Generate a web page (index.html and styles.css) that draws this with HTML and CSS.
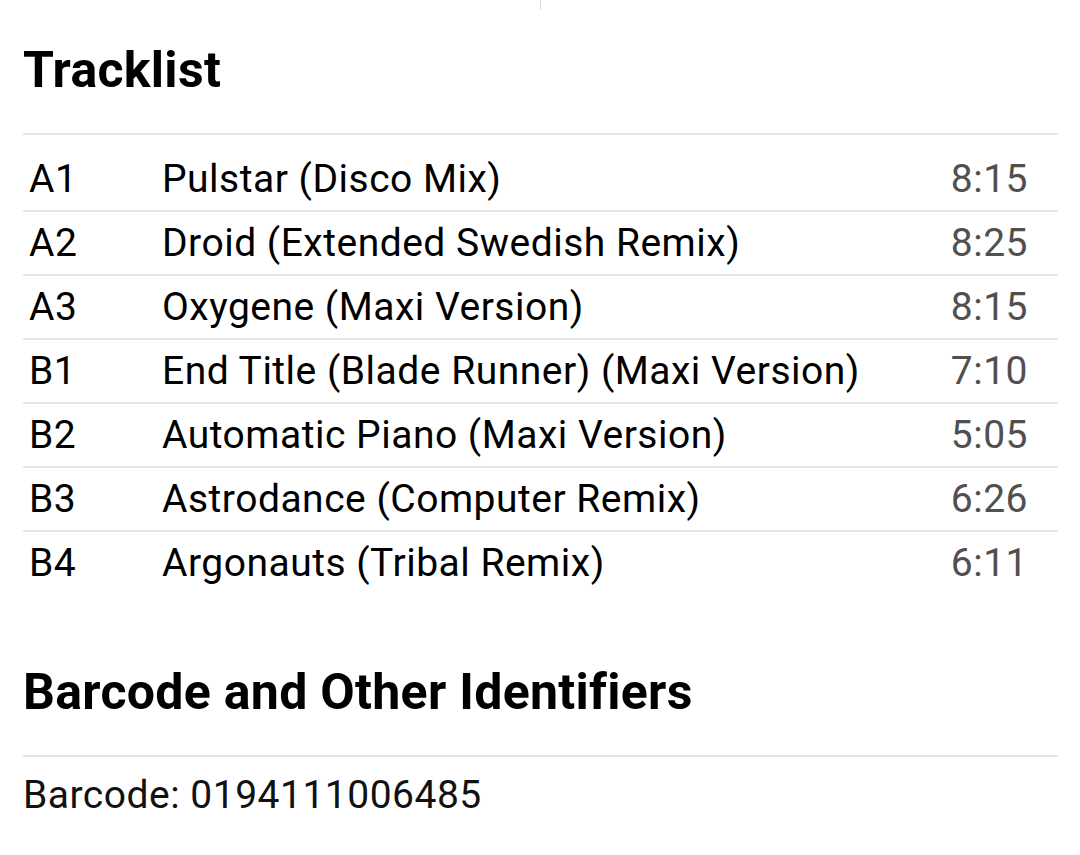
FILE: index.html
```html
<!DOCTYPE html>
<html lang="en">
<head>
<meta charset="utf-8">
<title>Tracklist</title>
<link rel="stylesheet" href="styles.css">
</head>
<body>
<div class="top-divider"><span class="vline"></span></div>
<section class="section">
  <h2 class="section-title">Tracklist</h2>
  <div class="tracklist">
    <div class="track"><span class="pos">A1</span><span class="title">Pulstar (Disco Mix)</span><span class="dur">8:15</span></div>
    <div class="track"><span class="pos">A2</span><span class="title">Droid (Extended Swedish Remix)</span><span class="dur">8:25</span></div>
    <div class="track"><span class="pos">A3</span><span class="title">Oxygene (Maxi Version)</span><span class="dur">8:15</span></div>
    <div class="track"><span class="pos">B1</span><span class="title">End Title (Blade Runner) (Maxi Version)</span><span class="dur">7:10</span></div>
    <div class="track"><span class="pos">B2</span><span class="title">Automatic Piano (Maxi Version)</span><span class="dur">5:05</span></div>
    <div class="track"><span class="pos">B3</span><span class="title">Astrodance (Computer Remix)</span><span class="dur">6:26</span></div>
    <div class="track"><span class="pos">B4</span><span class="title">Argonauts (Tribal Remix)</span><span class="dur">6:11</span></div>
  </div>
</section>
<section class="section section-ids">
  <h2 class="section-title">Barcode and Other Identifiers</h2>
  <p class="identifier">Barcode: 0194111006485</p>
</section>
</body>
</html>
```
FILE: styles.css
```css
html, body {
  margin: 0;
  padding: 0;
  background: #fff;
}
body {
  font-family: Roboto, "Noto Sans", sans-serif;
  color: #000;
  padding: 0 22px 0 23px;
}
.top-divider {
  height: 10px;
  display: flex;
  justify-content: center;
  margin-left: -23px;
  margin-right: -22px;
}
.vline {
  width: 1px;
  height: 10px;
  background: #d8d8d8;
}
.section-title {
  margin: 30px 0 0;
  font-size: 50px;
  line-height: 60px;
  font-weight: 700;
  letter-spacing: 0.3px;
  padding-bottom: 33px;
  border-bottom: 2px solid #e6e6e6;
}
.section-ids .section-title {
  margin-top: 68px;
}
.tracklist {
  margin-top: 13px;
}
.track {
  display: grid;
  grid-template-columns: 139px 1fr auto;
  align-items: center;
  height: 62px;
  font-size: 39px;
  line-height: 62px;
  letter-spacing: 0.5px;
}
.track + .track {
  border-top: 2px solid #e6e6e6;
}
.pos {
  padding-left: 6px;
}
.dur {
  padding-right: 30px;
  color: #505050;
}
.identifier {
  margin: 13px 0 0;
  font-size: 39px;
  line-height: 50px;
  letter-spacing: 0.5px;
  color: #111;
}
```
